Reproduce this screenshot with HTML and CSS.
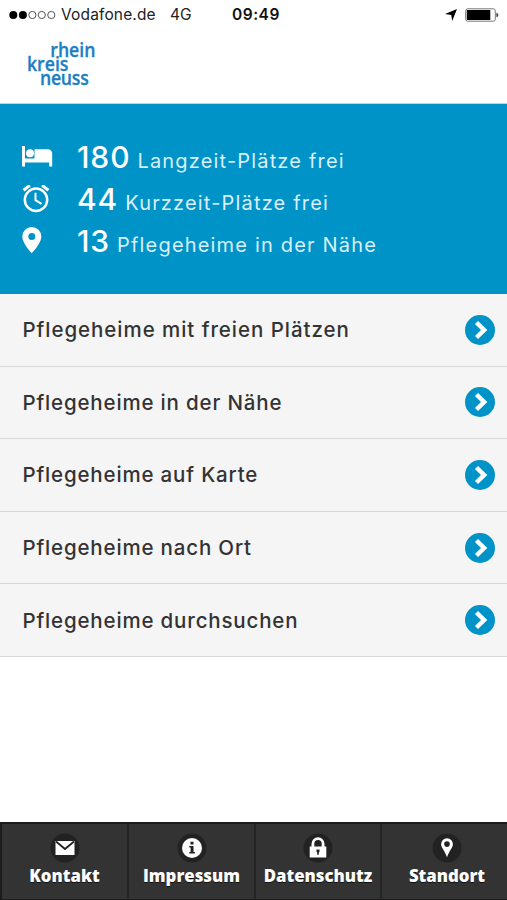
FILE: index.html
```html
<!DOCTYPE html>
<html lang="de">
<head>
<meta charset="utf-8">
<meta name="viewport" content="width=device-width">
<title>Pflegeheime</title>
<link rel="stylesheet" href="styles.css">
</head>
<body>
<div class="status">
  <svg class="signal" width="47" height="10" viewBox="0 0 47 10"><g fill="#000"><circle cx="4.3" cy="5" r="4"/><circle cx="13.9" cy="5" r="4"/></g><g fill="none" stroke="#555" stroke-width="1"><circle cx="23.4" cy="5" r="3.6"/><circle cx="32.8" cy="5" r="3.6"/><circle cx="42.3" cy="5" r="3.6"/></g></svg>
  <span class="carrier">Vodafone.de</span><span class="network">4G</span><span class="time">09:49</span>
  <svg class="gps" width="12" height="12" viewBox="0 0 12 12"><path d="M12 0 7.2 12 6.2 6 0 5z"/></svg>
  <svg class="battery" width="34" height="14" viewBox="0 0 34 14"><rect x=".7" y=".8" width="29.6" height="12.4" rx="2" fill="#fff" stroke="#777"/><rect x="1.8" y="2" width="23.5" height="10" rx=".5"/><path d="M31.4 4.8q2 .4 2 2.2t-2 2.2z" fill="#444"/></svg>
</div>
<header class="header"><div class="logo"><span class="logo-rhein">rhein</span><span class="logo-kreis">kreis</span><span class="logo-neuss">neuss</span></div></header>
<section class="stats">
  <div class="stat"><svg width="31" height="22" viewBox="0 0 31 22"><path d="M0 0h3v12.500h9.500V3.200h13q4.700 0 4.700 4.700V20.500h-3v-4H3v4H0z"/><circle cx="8" cy="7.200" r="4"/></svg><p><b>180</b><span>Langzeit-Plätze frei</span></p></div>
  <div class="stat"><svg width="31" height="28" viewBox="0 0 31 28"><g fill="none" stroke="#fff" stroke-width="2.500"><circle cx="14" cy="14.700" r="11.200"/><path d="M1.500 5.300 7.900.4M26.500 5.300 20.100.4" stroke-width="3"/><path d="M13.500 7.700v7.500l6 3.700" stroke-width="2"/></g></svg><p><b>44</b><span>Kurzzeit-Plätze frei</span></p></div>
  <div class="stat"><svg width="31" height="28" viewBox="0 0 31 28"><path fill-rule="evenodd" d="M9.800 0A9.500 9.500 0 0 0 .3 9.500C.3 16.500 9.800 26.200 9.800 26.200s9.500-9.700 9.500-16.700A9.500 9.500 0 0 0 9.800 0zm0 6a3.500 3.500 0 1 1 0 7 3.500 3.500 0 0 1 0-7z"/></svg><p><b>13</b><span>Pflegeheime in der Nähe</span></p></div>
</section>
<nav class="menu">
  <a><span class="first">Pflegeheime mit freien Plätzen</span><svg width="30" height="30" viewBox="0 0 30 30"><circle cx="15" cy="15" r="15"/><path d="m11.500 7.500 7.600 7.500-7.600 7.500"/></svg></a>
  <a><span>Pflegeheime in der Nähe</span><svg width="30" height="30" viewBox="0 0 30 30"><circle cx="15" cy="15" r="15"/><path d="m11.500 7.500 7.600 7.500-7.600 7.500"/></svg></a>
  <a><span>Pflegeheime auf Karte</span><svg width="30" height="30" viewBox="0 0 30 30"><circle cx="15" cy="15" r="15"/><path d="m11.500 7.500 7.600 7.500-7.600 7.500"/></svg></a>
  <a><span>Pflegeheime nach Ort</span><svg width="30" height="30" viewBox="0 0 30 30"><circle cx="15" cy="15" r="15"/><path d="m11.500 7.500 7.600 7.500-7.600 7.500"/></svg></a>
  <a><span>Pflegeheime durchsuchen</span><svg width="30" height="30" viewBox="0 0 30 30"><circle cx="15" cy="15" r="15"/><path d="m11.500 7.500 7.600 7.500-7.600 7.500"/></svg></a>
</nav>
<footer class="tabs">
  <a><svg width="30" height="30" viewBox="0 0 30 30"><circle cx="15" cy="15" r="14.500" fill="#222"/><path fill="#fff" d="M5.500 8h19v14h-19z"/><path d="m6 8.500 9 7.500 9-7.500" fill="none" stroke="#222" stroke-width="1.800"/></svg><span>Kontakt</span></a>
  <a><svg width="30" height="30" viewBox="0 0 30 30"><circle cx="15" cy="15" r="14.500" fill="#222"/><circle cx="15" cy="15" r="10" fill="#fff"/><path fill="#222" d="M13.500 8.700h3v2.800h-3zM12.300 13h4.200v6h1.400v1.600h-5.600V19h1.300v-4.400h-1.300z"/></svg><span>Impressum</span></a>
  <a><svg width="30" height="30" viewBox="0 0 30 30"><circle cx="15" cy="15" r="14.500" fill="#222"/><path d="M9.900 14v-3.200a5.100 5.100 0 0 1 10.200 0V14" fill="none" stroke="#fff" stroke-width="2.800"/><path fill="#fff" d="M6.700 13.500h16.600v11H6.700z"/><path fill="#222" d="M13.500 16.500h3v2.300l-.7.700v2.300h-1.600v-2.300l-.7-.7z"/></svg><span>Datenschutz</span></a>
  <a><svg width="30" height="30" viewBox="0 0 30 30"><circle cx="15" cy="15" r="14.500" fill="#222"/><path fill="#fff" fill-rule="evenodd" d="M15 5.300A5.900 5.900 0 0 0 9.100 11.200C9.100 14.500 12.500 17 15 24.300c2.500-7.300 5.900-9.800 5.900-13.100A5.900 5.900 0 0 0 15 5.300zm0 3a2.800 2.800 0 1 1 0 5.600 2.800 2.800 0 0 1 0-5.600z"/></svg><span>Standort</span></a>
</footer>
</body>
</html>
```
FILE: styles.css
```css
* { box-sizing: border-box; }
body { margin: 0; height: 900px; display: flex; flex-direction: column; background: #fff; font-family: Inter, sans-serif; overflow: hidden; }
svg { display: block; flex: none; }
.status { height: 30px; padding: 0 8px 0 9px; display: flex; align-items: center; font-size: 15.5px; line-height: 30px; color: #222; }
.carrier { margin-left: 5px; width: 109px; white-space: nowrap; letter-spacing: .15px; }
.network { width: 62px; }
.time { font-weight: 600; color: #111; letter-spacing: .5px; }
.gps { margin-left: auto; margin-right: 8px; }
.header { height: 74px; padding: 13px 0 0 27px; border-bottom: 1px solid #b5dbea; }
.logo { display: flex; flex-direction: column; color: #1b7fc2; font: 600 19px/14px "Open Sans", sans-serif; transform: scaleX(.93); transform-origin: 0 0; -webkit-text-stroke: .3px #1b7fc2; }
.logo span { align-self: flex-start; }
.logo-rhein { margin-left: 25px; }
.logo-neuss { margin-left: 14px; letter-spacing: -.3px; }
.stats { height: 190px; padding: 32px 22px 0; background: #0093c8; color: #fff; }
.stat { display: flex; align-items: center; height: 42px; }
.stat svg { fill: #fff; margin-right: 24px; }
.stat p { margin: 4px 0 0; white-space: nowrap; line-height: 42px; font-size: 20px; letter-spacing: 1.18px; color: #d9f0fa; }
.stat b { margin-right: 7px; font: 500 30px/42px Inter, sans-serif; letter-spacing: .9px; color: #fff; }
.menu { height: 363px; display: grid; grid-template-rows: repeat(5, 1fr); background: #f5f5f5; }
.menu a { display: flex; align-items: center; justify-content: space-between; padding: 0 12px 0 22.5px; border-bottom: 1px solid #d8d8d8; font-size: 20.5px; font-weight: 500; letter-spacing: .83px; color: #333; white-space: nowrap; }
.menu .first { letter-spacing: .95px; }
.menu circle { fill: #0093c8; }
.menu path { fill: none; stroke: #fff; stroke-width: 4.5; }
.tabs { margin-top: auto; height: 78px; display: grid; grid-template-columns: 127px 127px 126px 1fr; border: solid #1c1c1c; border-width: 2px 0 1px 2px; background: #333; }
.tabs a { display: flex; flex-direction: column; align-items: center; padding-top: 9px; border-right: 2px solid #242424; color: #fff; font: 800 16.8px/24px "Open Sans", sans-serif; text-shadow: 0 1px 0 #111; }
.tabs a:last-child { padding-left: 5px; border-right: 0; }
.tabs span { margin-top: 1px; }
```
